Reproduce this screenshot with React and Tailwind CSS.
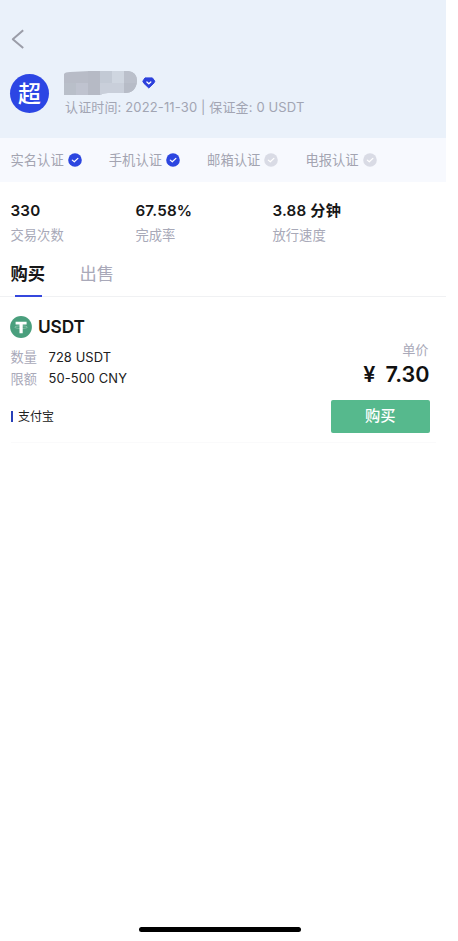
const certs = [
  { label: '实名认证', done: true },
  { label: '手机认证', done: true },
  { label: '邮箱认证', done: false },
  { label: '电报认证', done: false }
];

const stats = [
  { value: '330', label: '交易次数', width: 'w-[125px]' },
  { value: '67.58%', label: '完成率', width: 'w-[137px]' },
  { value: '3.88 分钟', label: '放行速度', width: 'w-[120px]' }
];

const CheckBadge = ({ done }) => (
  <svg viewBox="0 0 14 14" className={`w-3.5 h-3.5 shrink-0 ${done ? 'text-[#2c46e0]' : 'text-[#d9dbe5]'}`}>
    <circle cx="7" cy="7" r="6.8" fill="currentColor" />
    <path d="M4.3 7.1 6.3 8.8 9.9 5.4" fill="none" stroke="#fff" strokeWidth="1.2" strokeLinecap="round" strokeLinejoin="round" />
  </svg>
);

const Diamond = () => (
  <svg viewBox="0 0 14 12" className="w-3.5 h-3">
    <path d="M3 .9h7.4L12.8 4.2 11.8 6.2 6.8 11 1.8 6.2.8 4.2Z" fill="#2c40dc" stroke="#2c40dc" strokeWidth="1" strokeLinejoin="round" />
    <path d="M4.9 5 6.8 6.8 8.8 5" fill="none" stroke="#fff" strokeWidth="1.3" strokeLinecap="round" strokeLinejoin="round" />
  </svg>
);

const Tether = () => (
  <svg viewBox="0 0 22 22" className="-ml-[0.5px] w-[22px] h-[22px]">
    <circle cx="11" cy="11" r="10.9" fill="#4a9f7d" />
    <ellipse cx="11.1" cy="11.2" rx="6.4" ry="1.3" fill="none" stroke="#fff" strokeOpacity=".6" strokeWidth=".5" />
    <path d="M5.6 5.8h11v2.6h-3.9v8.8H9.5V8.4H5.6Z" fill="#fff" />
  </svg>
);

// Pixelated cover over the merchant name
const HiddenName = () => (
  <svg viewBox="0 0 73 25" className="mt-[0.5px] w-[73px] h-[25px]">
    <defs>
      <clipPath id="name-shape">
        <path d="M0 3Q1 1 6 1L26 0H64Q73 1 73 10 72 22 61 22H44Q39 22 36 24H0Z" />
      </clipPath>
    </defs>
    <g clipPath="url(#name-shape)">
      <rect width="73" height="25" fill="#b8bcc7" />
      <rect y="12" width="12" height="13" fill="#b9bfc9" />
      <rect x="12" y="12" width="12" height="13" fill="#bfc3cf" />
      <rect x="24" width="12" height="25" fill="#b6bac5" />
      <rect x="36" width="12" height="13" fill="#c3cad5" />
      <rect x="48" width="12" height="13" fill="#cfd6e0" />
      <rect x="36" y="12" width="24" height="13" fill="#c9cfda" />
      <rect x="60" width="13" height="12" fill="#bbc0cb" />
      <rect x="60" y="12" width="13" height="13" fill="#b7bcc7" />
    </g>
  </svg>
);

const Header = () => (
  <header className="h-[138px] bg-[#eaf1fa] pt-[29px] pl-2.5">
    <svg viewBox="0 0 16 20" className="w-4 h-5">
      <path d="M13.2 1.2 2.8 10.2l10.4 8.8" fill="none" stroke="#9b9da8" strokeWidth="2" strokeLinejoin="round" />
    </svg>
    <div className="mt-[21px] flex">
      <div className="mt-1 w-[39px] h-[39px] rounded-full bg-[#2c46e4] text-white text-[23px] font-medium flex items-center justify-center">
        <span className="leading-none pt-px">超</span>
      </div>
      <div className="ml-[15px]">
        <div className="flex">
          <HiddenName />
          <div className="ml-[5px] mt-[7px]">
            <Diamond />
          </div>
        </div>
        <p className="ml-px mt-[2.5px] text-[13px] leading-[18px] tracking-[0.14px] text-[#a2a5b3] whitespace-nowrap">
          认证时间: 2022-11-30 | 保证金: 0 USDT
        </p>
      </div>
    </div>
  </header>
);

const Offer = () => (
  <section className="mx-[10.5px] h-[146px] border-b border-[#fafafb] flex justify-between">
    <div className="pt-[19px]">
      <div className="flex items-center h-[22px]">
        <Tether />
        <span className="ml-[6px] text-[17.3px] tracking-[-0.15px] font-semibold text-[#151515]">USDT</span>
      </div>
      <div className="mt-[9px] flex items-center h-[21px]">
        <span className="w-[38px] text-[13.2px] text-[#a9a9b9]">数量</span>
        <span className="text-[12.9px] tracking-[0.1px] text-[#202020]">728 USDT</span>
      </div>
      <div className="flex items-center h-[22px]">
        <span className="w-[38px] pt-px text-[13.2px] text-[#a9a9b9]">限额</span>
        <span className="text-[12.9px] tracking-[0.1px] text-[#202020]">50-500 CNY</span>
      </div>
      <div className="mt-[16px] flex items-center h-5">
        <span className="w-[2.5px] h-[11px] bg-[#2840b8]" />
        <span className="ml-[5px] pt-px text-[12px] text-[#202020]">支付宝</span>
      </div>
    </div>
    <div className="mr-[6px] pt-[43px] flex flex-col items-end">
      <span className="mr-px text-[13.2px] leading-5 text-[#a9a9b9]">单价</span>
      <span className="text-[21.6px] leading-7 font-semibold text-[#111]">
        ¥<span className="ml-[10px]">7.30</span>
      </span>
      <button className="mt-[12px] w-[98.5px] h-[32.5px] rounded-[2px] bg-[#56b98d] text-white text-[15.3px] font-medium">
        购买
      </button>
    </div>
  </section>
);

const App = () => (
  <div className="min-h-[941px] bg-white font-[Inter,'Noto_Sans_CJK_SC',sans-serif]">
    <main className="w-[446px] h-[941px] flex flex-col">
      <Header />

      <div className="h-11 bg-[#f7f9fe] pl-[10.5px] flex items-center">
        {certs.map(({ label, done }) => (
          <div key={label} className="w-[98.3px] flex items-center gap-1 text-[13.3px] text-[#a3a4b1]">
            <span className="pt-px">{label}</span>
            <CheckBadge done={done} />
          </div>
        ))}
      </div>

      <div className="pl-[10.5px] pt-[19px] flex">
        {stats.map(({ value, label, width }) => (
          <div key={label} className={width}>
            <p className="h-5 text-[15.2px] leading-5 tracking-[0.15px] font-semibold text-[#171717]">{value}</p>
            <p className="mt-1 h-5 text-[13.3px] leading-5 text-[#a8a9b8]">{label}</p>
          </div>
        ))}
      </div>

      <nav className="h-[52px] pl-[10.5px] border-b border-[#f0f1f3] flex gap-[34.5px] text-[17.3px] leading-[26px]">
        <div className="pt-4 h-[52px] flex flex-col items-center justify-between font-bold text-[#171717]">
          购买
          <span className="ml-px w-[27px] h-[2px] shrink-0 bg-[#3547dd]" />
        </div>
        <div className="pt-4 text-[#a9a9b9]">出售</div>
      </nav>

      <Offer />

      <div className="mt-auto mb-[9px] ml-[139px] w-[162px] h-[5px] rounded-full bg-black" />
    </main>
  </div>
);

export default App;
